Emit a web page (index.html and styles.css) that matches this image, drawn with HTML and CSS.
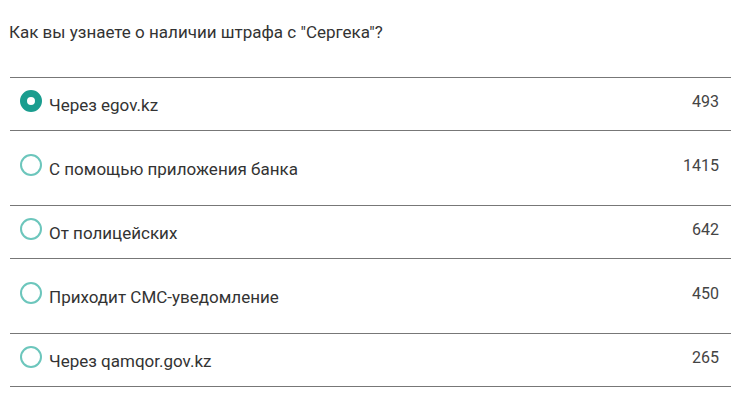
FILE: index.html
```html
<!doctype html>
<html lang="ru">
	<head>
		<title>Опрос</title>
		<meta charset="utf-8">
		<link rel="stylesheet" href="styles.css">
	</head>
<body>

	<div class="poll">
		<p class="question">Как вы узнаете о наличии штрафа с "Сергека"?</p>

		<ul class="answers">
			<li class="answer">
				<span class="radio checked"></span>
				<span class="label">Через egov.kz</span>
				<span class="count">493</span>
			</li>
			<li class="answer tall">
				<span class="radio"></span>
				<span class="label">С помощью приложения банка</span>
				<span class="count">1415</span>
			</li>
			<li class="answer">
				<span class="radio"></span>
				<span class="label">От полицейских</span>
				<span class="count">642</span>
			</li>
			<li class="answer tall">
				<span class="radio"></span>
				<span class="label">Приходит СМС-уведомление</span>
				<span class="count">450</span>
			</li>
			<li class="answer">
				<span class="radio"></span>
				<span class="label">Через qamqor.gov.kz</span>
				<span class="count">265</span>
			</li>
		</ul>
	</div>

</body>
</html>
```

FILE: styles.css
```css
body { margin: 0; background: #fff; font-family: Roboto, "Liberation Sans", Arial, sans-serif; color: #333; }

.poll { padding: 0 9px 0 10px; }

.question { margin: 0 0 0 -1px; padding: 22px 0 0 0; font-size: 17px; line-height: 20px; height: 55px; }

.answers { list-style: none; margin: 0; padding: 0; border-bottom: 1px solid #777; }

.answer {
  display: flex;
  align-items: flex-start;
  border-top: 1px solid #777;
  padding: 12px 12px 15px 10px;
  height: 25px;
}
.answer.tall { padding-top: 23px; padding-bottom: 26px; }

.radio {
  flex: none;
  box-sizing: border-box;
  width: 22px;
  height: 22px;
  border-radius: 50%;
  border: 2px solid #6cc6bc;
}
.radio.checked { border: 7px solid #1a9d8f; background: #fff; }

.label { flex: 1; margin: 5px 0 0 7px; font-size: 17px; line-height: 20px; color: #333; }

.count { margin-top: 2px; font-size: 16px; line-height: 20px; color: #444; }
```
